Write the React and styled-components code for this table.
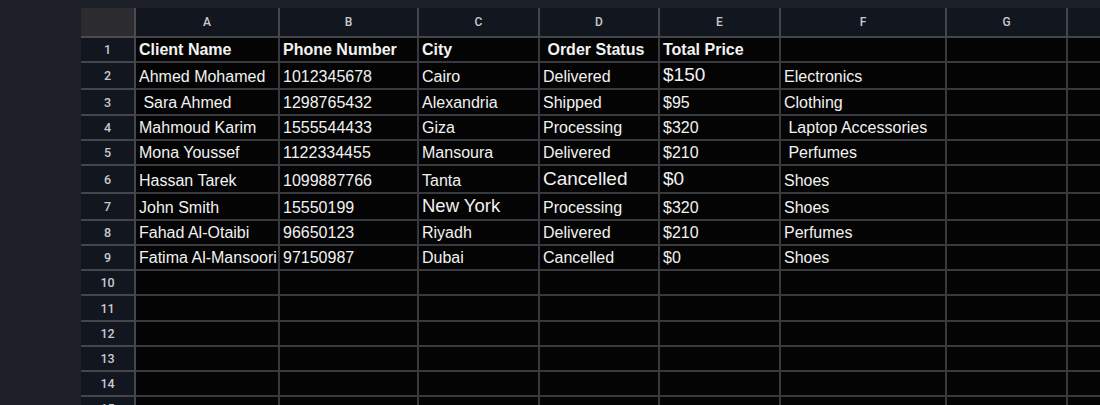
import React from "react";
import styled, { createGlobalStyle } from "styled-components";

const GlobalStyle = createGlobalStyle`
  html, body {
    margin: 0;
    padding: 0;
    background: #1d1f27;
    overflow: hidden;
  }
`;

const Page = styled.div`
  box-sizing: border-box;
  width: 1100px;
  height: 405px;
  padding: 8px 0 0 81px;
  overflow: hidden;
  background: #1d1f27;
`;

const Sheet = styled.div`
  display: grid;
  grid-template-columns: 55px 144px 139px 121px 120px 121px 166px 121px 121px;
  grid-template-rows: ${(p) => p.$rows.map((r) => `${r}px`).join(" ")};
  font-family: "Liberation Sans", Arial, sans-serif;
`;

const Corner = styled.div`
  background: #2c2b30;
  border-right: 2px solid #4a4a50;
  border-bottom: 2px solid #4a4a50;
`;

const ColHeader = styled.div`
  display: flex;
  align-items: center;
  justify-content: center;
  background: #12161f;
  border-right: 2px solid #45464c;
  border-bottom: 2px solid #45464c;
  color: #c9cacf;
  font-family: Roboto, "Liberation Sans", sans-serif;
  font-size: 12px;
  font-weight: 500;
`;

const RowHeader = styled.div`
  display: flex;
  align-items: center;
  justify-content: center;
  background: #12161f;
  border-right: 2px solid #45464c;
  border-bottom: 2px solid #45464c;
  color: #c9cacf;
  font-family: Roboto, "Liberation Sans", sans-serif;
  font-size: 12.5px;
  font-weight: 500;
  overflow: hidden;
`;

const Cell = styled.div`
  display: flex;
  align-items: flex-end;
  background: #040404;
  border-right: 2px solid #38393e;
  border-bottom: 2px solid #38393e;
  padding: 0 0 ${(p) => (p.$size && p.$size > 16 ? 4 : 2)}px 3px;
  color: #f2f2f2;
  font-size: ${(p) => p.$size || 16}px;
  font-weight: ${(p) => (p.$bold ? 700 : 400)};
  line-height: 18px;
  white-space: pre;
  overflow: visible;
  position: relative;
  z-index: ${(p) => (p.$text ? 1 : 0)};
`;

const columns = ["A", "B", "C", "D", "E", "F", "G", ""];

const rowHeights = [30, 25, 27, 26, 25, 25, 28, 27, 25, 25, 25, 26, 25, 25, 25, 25];

const data = [
  [{ t: "Client Name" }, { t: "Phone Number" }, { t: "City" }, { t: " Order Status" }, { t: "Total Price" }, { t: "" }],
  [{ t: "Ahmed Mohamed" }, { t: "1012345678" }, { t: "Cairo" }, { t: "Delivered" }, { t: "$150", s: 19 }, { t: "Electronics" }],
  [{ t: " Sara Ahmed" }, { t: "1298765432" }, { t: "Alexandria" }, { t: "Shipped" }, { t: "$95" }, { t: "Clothing" }],
  [{ t: "Mahmoud Karim" }, { t: "1555544433" }, { t: "Giza" }, { t: "Processing" }, { t: "$320" }, { t: " Laptop Accessories" }],
  [{ t: "Mona Youssef" }, { t: "1122334455" }, { t: "Mansoura" }, { t: "Delivered" }, { t: "$210" }, { t: " Perfumes" }],
  [{ t: "Hassan Tarek" }, { t: "1099887766" }, { t: "Tanta" }, { t: "Cancelled", s: 19 }, { t: "$0", s: 19 }, { t: "Shoes" }],
  [{ t: "John Smith" }, { t: "15550199" }, { t: "New York", s: 18.5 }, { t: "Processing" }, { t: "$320" }, { t: "Shoes" }],
  [{ t: "Fahad Al-Otaibi" }, { t: "96650123" }, { t: "Riyadh" }, { t: "Delivered" }, { t: "$210" }, { t: "Perfumes" }],
  [{ t: "Fatima Al-Mansoori" }, { t: "97150987" }, { t: "Dubai" }, { t: "Cancelled" }, { t: "$0" }, { t: "Shoes" }],
];

export default function App() {
  const rowCount = rowHeights.length - 1;
  return (
    <>
      <GlobalStyle />
      <Page>
        <Sheet $rows={rowHeights}>
          <Corner />
          {columns.map((c, i) => (
            <ColHeader key={`h${i}`}>{c}</ColHeader>
          ))}
          {Array.from({ length: rowCount }, (_, r) => {
            const row = data[r] || [];
            return (
              <React.Fragment key={`r${r}`}>
                <RowHeader>{r + 1}</RowHeader>
                {columns.map((_, c) => {
                  const cell = row[c];
                  return (
                    <Cell
                      key={`c${r}-${c}`}
                      $bold={r === 0}
                      $size={cell && cell.s}
                      $text={!!(cell && cell.t)}
                    >
                      {cell ? cell.t : ""}
                    </Cell>
                  );
                })}
              </React.Fragment>
            );
          })}
        </Sheet>
      </Page>
    </>
  );
}
